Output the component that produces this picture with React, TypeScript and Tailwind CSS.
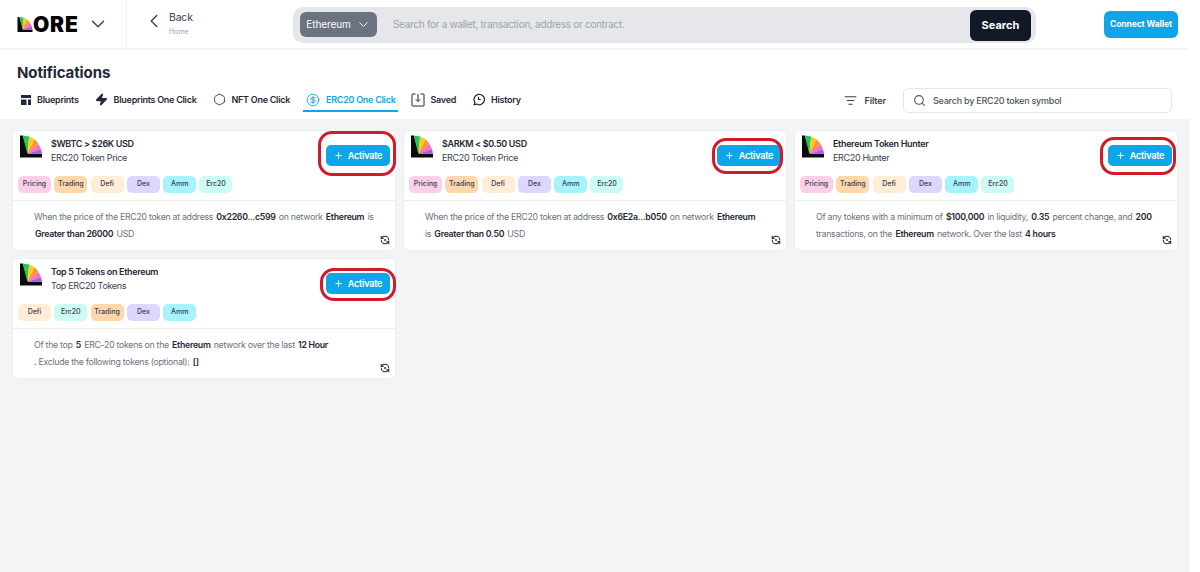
import { ChevronDown, ChevronLeft, CircleDollarSign, Hexagon, ListFilter, Plus, RefreshCcwDot, Search, Zap } from "lucide-react";
import type { ReactNode } from "react";

const tagColors: Record<string, string> = {
  Pricing: "bg-[#fbcfe8]",
  Trading: "bg-[#fed7aa]",
  Defi: "bg-[#ffedd5]",
  Dex: "bg-[#ddd6fe]",
  Amm: "bg-[#a5f3fc]",
  Erc20: "bg-[#ccfbf1]",
};

const LogoMark = ({ className }: { className: string }) => (
  <svg viewBox="0 0 24 24" className={className}>
    <path d="M0 0h3l6 20h15v4H0z" fill="#0a0a0a" />
    <path d="M3 0l7 1-2 19z" fill="#22c55e" />
    <path d="M10 1l6 3-8 16z" fill="#facc15" />
    <path d="M16 4l4 5-12 11z" fill="#fb923c" />
    <path d="M20 9l3 6-15 5z" fill="#f472b6" />
    <path d="M23 15l1 5H8z" fill="#a855f7" />
  </svg>
);

const Tab = ({ icon, label, active }: { icon: ReactNode; label: string; active?: boolean }) => (
  <div
    className={`flex h-[22px] items-center gap-[6px] border-b-2 ${
      active ? "mx-[-3px] border-[#0ea5e9] pl-[3px] pr-[2px] text-[#0ea5e9]" : "border-transparent text-[#1f2937]"
    }`}
  >
    {icon}
    <span className="text-[9px] font-semibold tracking-[-0.27px]">{label}</span>
  </div>
);

const Card = ({
  title,
  subtitle,
  tags,
  lines,
  ring,
}: {
  title: string;
  subtitle: string;
  tags: string[];
  lines: ReactNode[];
  ring: string;
}) => (
  <div className="relative h-[121px] rounded-md border border-[#eceef1] bg-white">
    <div className="flex h-[45px] items-start justify-between pl-[7px] pr-[5px] pt-[4px]">
      <div className="flex gap-[9px]">
        <LogoMark className="h-[23px] w-[22px]" />
        <div className="pt-[2px] text-[9px] leading-[14px] tracking-[-0.34px]">
          <div className="font-semibold text-[#1f2937]">{title}</div>
          <div className="text-[#374151]">{subtitle}</div>
        </div>
      </div>
      <button className="mt-[10px] flex h-[21px] w-[64px] items-center justify-center gap-[5px] rounded-[5px] bg-[#0ea5e9] text-[9.250px] font-semibold tracking-[-0.3px] text-white">
        <Plus size={9} strokeWidth={3} />
        Activate
      </button>
    </div>
    <div className={`absolute rounded-[14px] border-[3px] border-[#d11a2a] ${ring}`} />
    <div className="flex gap-[3.3px] px-[5px]">
      {tags.map((tag) => (
        <span
          key={tag}
          className={`flex h-[17px] w-[33px] items-center justify-center rounded-[5px] text-[7px] font-medium text-[#374151] ${tagColors[tag]}`}
        >
          {tag}
        </span>
      ))}
    </div>
    <div className="mt-[7px] border-t border-[#eceef1] pl-[21px] pt-[8px] text-[8.750px] leading-[17px] tracking-[-0.28px] whitespace-nowrap text-[#6b7280]">
      {lines.map((line, i) => (
        <div key={i}>{line}</div>
      ))}
    </div>
    <RefreshCcwDot className="absolute bottom-[5px] right-[5px] h-[10px] w-[10px] text-[#1f2937]" strokeWidth={2.5} />
  </div>
);

const B = ({ children }: { children: ReactNode }) => (
  <b className="mx-[1px] font-semibold text-[#1f2937]">{children}</b>
);

const priceTags = ["Pricing", "Trading", "Defi", "Dex", "Amm", "Erc20"];

export default function App() {
  return (
    <div className="h-[572px] w-[1200px] overflow-hidden bg-white font-['Inter',sans-serif]">
      <div className="flex h-[572px] w-[1189px] flex-col bg-[#f3f4f6]">
        {/* top bar */}
        <header className="flex h-[50px] shrink-0 items-center border-b-2 border-[#f3f4f6] bg-white">
          <div className="flex h-full w-[127px] shrink-0 items-center border-r border-[#f0f1f3] pl-[17px]">
            <LogoMark className="h-[15px] w-[16px]" />
            <span className="text-[21px] leading-none font-black tracking-[0.8px] text-black">ORE</span>
            <ChevronDown size={22} strokeWidth={1.5} className="ml-[8px] text-[#374151]" />
          </div>
          <div className="flex w-[166px] shrink-0 items-center gap-[4px] pl-[16px]">
            <ChevronLeft size={22} className="mb-[6px] text-[#374151]" strokeWidth={1.5} />
            <div>
              <div className="text-[10.500px] leading-[13px] tracking-[-0.2px] text-[#374151]">Back</div>
              <div className="mt-[2px] text-[7px] leading-[12px] text-[#9ca3af]">Home</div>
            </div>
          </div>
          <div className="mt-[2px] flex h-[36px] w-[743px] shrink-0 items-center rounded-[10px] bg-[#e5e7eb] pl-[7px] pr-[5px]">
            <div className="mb-[2px] flex h-[25px] w-[77px] items-center justify-center gap-[5px] rounded-md bg-[#6b7280] text-[10px] tracking-[-0.1px] text-white">
              Ethereum
              <ChevronDown size={15} strokeWidth={1.5} />
            </div>
            <span className="mb-[1px] ml-[16px] flex-1 text-[10px] tracking-[-0.3px] text-[#9ca3af]">Search for a wallet, transaction, address or contract.</span>
            <button className="h-[31px] w-[61px] rounded-md bg-[#111827] pt-[1px] text-[11px] font-bold text-white">Search</button>
          </div>
          <button className="ml-[68px] flex h-[27px] w-[74px] items-center justify-center rounded-md bg-[#0ea5e9] text-[8.500px] font-bold tracking-[-0.1px] text-white">
            Connect Wallet
          </button>
        </header>

        {/* page heading and tabs */}
        <section className="h-[69px] shrink-0 bg-white px-[17px]">
          <h1 className="pt-[13px] text-[15px] leading-[20px] font-bold tracking-[-0.1px] text-[#1f2937]">Notifications</h1>
          <div className="mt-[5px] flex items-center">
            <div className="ml-[4px] flex items-center gap-[16px]">
              <Tab
                icon={
                  <svg viewBox="0 0 10 10" className="h-[10px] w-[10px]" fill="currentColor">
                    <rect width="10" height="3" />
                    <rect y="4.500" width="5.500" height="5.500" />
                    <rect x="7" y="4.500" width="3" height="5.500" />
                  </svg>
                }
                label="Blueprints"
              />
              <Tab icon={<Zap size={13} fill="currentColor" />} label="Blueprints One Click" />
              <Tab icon={<Hexagon size={13} strokeWidth={1.5} />} label="NFT One Click" />
              <Tab active icon={<CircleDollarSign size={14} strokeWidth={1.5} />} label="ERC20 One Click" />
              <Tab
                icon={
                  <svg viewBox="0 0 14 14" className="h-[14px] w-[14px]" fill="none" stroke="currentColor">
                    <path d="M4.500 1H1.500a.5.5 0 0 0-.5.500v11a.5.5 0 0 0 .5.500h11a.5.5 0 0 0 .5-.500v-11a.5.5 0 0 0-.5-.500H9.500" />
                    <path d="M7 1v7.500M4.800 6.300L7 8.500l2.200-2.200" />
                  </svg>
                }
                label="Saved"
              />
              <Tab
                icon={
                  <svg viewBox="0 0 14 14" className="h-[13px] w-[13px]" fill="none" stroke="currentColor" strokeWidth="1.300">
                    <path d="M2.400 12.600l.7-2.500A5.600 5.600 0 1 1 5 11.900z" />
                    <path d="M7 4v3h2.500" />
                  </svg>
                }
                label="History"
              />
            </div>
            <div className="ml-auto flex items-center gap-[7px] text-[#374151]">
              <ListFilter size={13} />
              <span className="text-[9px] font-semibold tracking-[-0.1px]">Filter</span>
            </div>
            <div className="ml-[17px] flex h-[25px] w-[269px] items-center gap-[7px] rounded-[5px] border border-[#e5e7eb] pl-[9px] text-[#4b5563]">
              <Search size={13} />
              <span className="text-[9px] font-medium tracking-[-0.23px]">Search by ERC20 token symbol</span>
            </div>
          </div>
        </section>

        {/* blueprint cards */}
        <main className="grid grid-cols-3 gap-x-[7px] gap-y-[7px] pl-[12px] pr-[11px] pt-[11px]">
          <Card
            title="$WBTC > $26K USD"
            subtitle="ERC20 Token Price"
            tags={priceTags}
            ring="left-[305px] top-[0px] h-[45px] w-[78px]"
            lines={[
              <>When the price of the ERC20 token at address <B>0x2260...c599</B> on network <B>Ethereum</B> is</>,
              <><B>Greater than 26000</B> USD</>,
            ]}
          />
          <Card
            title="$ARKM < $0.50 USD"
            subtitle="ERC20 Token Price"
            tags={priceTags}
            ring="left-[308px] top-[7px] h-[36px] w-[71px]"
            lines={[
              <>When the price of the ERC20 token at address <B>0x6E2a...b050</B> on network <B>Ethereum</B></>,
              <>is <B>Greater than 0.50</B> USD</>,
            ]}
          />
          <Card
            title="Ethereum Token Hunter"
            subtitle="ERC20 Hunter"
            tags={priceTags}
            ring="left-[305px] top-[6px] h-[38px] w-[76px]"
            lines={[
              <>Of any tokens with a minimum of <B>$100,000</B> in liquidity, <B>0.35</B> percent change, and <B>200</B></>,
              <>transactions, on the <B>Ethereum</B> network. Over the last <B>4 hours</B></>,
            ]}
          />
          <Card
            title="Top 5 Tokens on Ethereum"
            subtitle="Top ERC20 Tokens"
            tags={["Defi", "Erc20", "Trading", "Dex", "Amm"]}
            ring="left-[307px] top-[9px] h-[33px] w-[76px]"
            lines={[
              <>Of the top <B>5</B> ERC-20 tokens on the <B>Ethereum</B> network over the last <B>12 Hour</B></>,
              <>. Exclude the following tokens (optional): <B>[]</B></>,
            ]}
          />
        </main>
      </div>
    </div>
  );
}
